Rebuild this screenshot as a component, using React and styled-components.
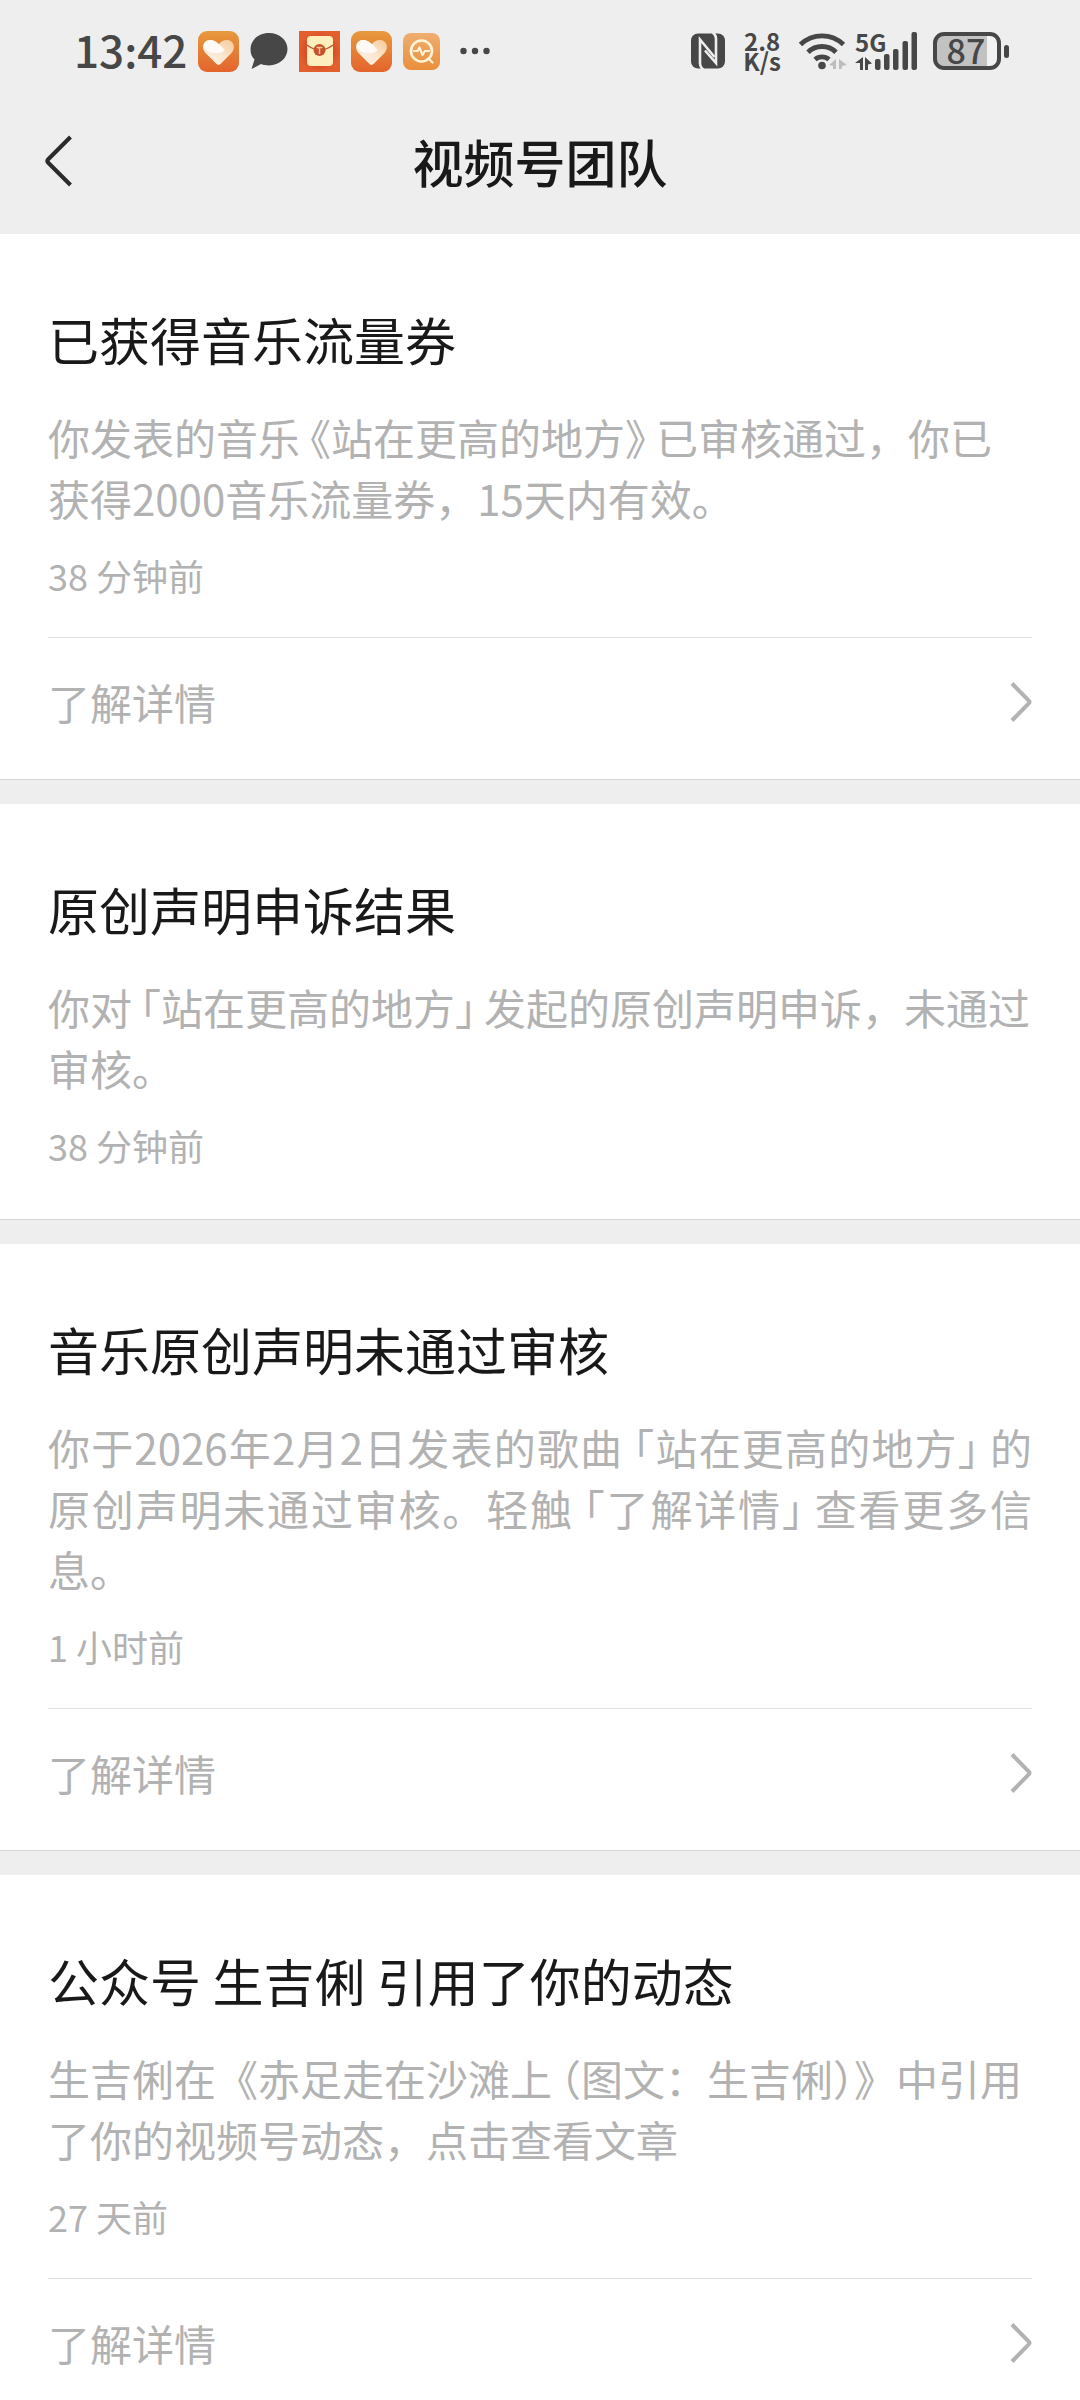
import React from "react";
import styled, { createGlobalStyle } from "styled-components";

const GlobalStyle = createGlobalStyle`
  * { box-sizing: border-box; }
  body {
    margin: 0;
    background: #ffffff;
    font-family: "Noto Sans CJK SC", "Noto Sans", sans-serif;
  }
  h1, h2, p { margin: 0; }
`;

const Screen = styled.div`
  height: 100vh;
  display: flex;
  flex-direction: column;
  background: #ffffff;
`;

const TopArea = styled.header`
  flex: none;
  background: #eeeeee;
  padding-bottom: 14px;
`;

const StatusBar = styled.div`
  display: flex;
  justify-content: space-between;
  align-items: center;
  height: 102px;
  padding: 0 71px 0 74px;
  color: #474747;
`;

const StatusGroup = styled.div`
  display: flex;
  align-items: center;
  gap: ${(p) => p.$gap}px;
`;

const Clock = styled.time`
  padding-bottom: 4px;
  font-size: 44px;
  line-height: 60px;
  font-weight: 500;
`;

const NetSpeed = styled.div`
  font-size: 24px;
  line-height: 20px;
  font-weight: 700;
  text-align: center;
`;

const Signal = styled.div`
  position: relative;
  display: flex;
`;

const NetType = styled.span`
  position: absolute;
  left: 0;
  top: 0;
  font-size: 24px;
  line-height: 20px;
  font-weight: 700;
`;

const Battery = styled.div`
  display: flex;
  align-items: center;
  gap: 3px;
`;

const BatteryBody = styled.div`
  display: flex;
  align-items: center;
  justify-content: center;
  width: 68px;
  height: 38px;
  padding: 0 2px 3px 0;
  border: 4px solid #474747;
  border-radius: 11px;
  background: linear-gradient(to right, #c2c2c2 50px, #f2f2f2 50px);
  font-size: 34px;
  line-height: 38px;
  font-weight: 500;
`;

const BatteryTip = styled.div`
  width: 5px;
  height: 13px;
  border-radius: 3px;
  background: #474747;
`;

const NavBar = styled.div`
  display: grid;
  grid-template-columns: 120px 1fr 120px;
  align-items: center;
  height: 118px;
`;

const BackButton = styled.button`
  display: flex;
  align-items: center;
  height: 100px;
  padding: 0 0 0 44px;
  border: 0;
  background: none;
`;

const NavTitle = styled.h1`
  font-size: 51px;
  line-height: 74px;
  font-weight: 500;
  text-align: center;
  color: #191919;
`;

const MessageList = styled.main`
  flex: 1;
  min-height: 0;
  overflow-y: auto;
  scrollbar-width: none;
  background: #eeeeee;
`;

const Card = styled.article`
  margin-bottom: 24px;
  padding: 70px 48px ${(p) => (p.$linked ? 14 : 49)}px;
  border-bottom: 1px solid #d8d8d8;
  background: #ffffff;
`;

const CardTitle = styled.h2`
  font-size: 51px;
  line-height: 70px;
  font-weight: 400;
  color: #191919;
`;

const CardText = styled.p`
  margin-top: 32px;
  font-size: 42px;
  line-height: 61px;
  text-align: ${(p) => (p.$justify ? "justify" : "left")};
  color: #b2b2b2;
`;

const CardTime = styled.time`
  display: block;
  margin-top: 22px;
  font-size: 36px;
  line-height: 50px;
  color: #b2b2b2;
`;

const DetailLink = styled.a`
  display: flex;
  justify-content: space-between;
  align-items: center;
  height: 128px;
  margin-top: 37px;
  border-top: 1px solid #e2e2e2;
  font-size: 42px;
  line-height: 61px;
  color: #b2b2b2;
  text-decoration: none;
`;

/* Brackets set at half width, with a small gap on their outer side. */
const Open = styled.span`
  margin-left: ${(p) => (p.$tight ? 8 : 10)}px;
  font-feature-settings: "halt";
`;

const Close = styled.span`
  margin-right: ${(p) => (p.$tight ? 8 : 10)}px;
  font-feature-settings: "halt";
`;

function HeartApp({ id }) {
  return (
    <svg width="41" height="41" viewBox="0 0 41 41" aria-hidden="true">
      <defs>
        <linearGradient id={id} x1="0" y1="0" x2="0" y2="1">
          <stop offset="0" stopColor="#e79a3e" />
          <stop offset="1" stopColor="#e4642c" />
        </linearGradient>
        <linearGradient id={id + "h"} x1="1" y1="0" x2="0" y2="1">
          <stop offset="0" stopColor="#f6c995" />
          <stop offset="0.5" stopColor="#fbe7d2" />
          <stop offset="1" stopColor="#fff4ea" />
        </linearGradient>
      </defs>
      <rect width="41" height="41" rx="9" fill={`url(#${id})`} />
      <path
        d="M18.500 33 7.500 22C3 17.400 4.500 9 12 9c4 0 6.500 2 8.500 4.500C22.500 11 25 9 29 9c7.200 0 9 8.400 4.500 13L22.500 33q-2 1.800-4 0Z"
        fill={`url(#${id}h)`}
      />
      <path d="M6 17c-1-5 2-8 6.500-8 5 0 11 6 14 10-2 3-5 3-9 3-5 0-10-2-11.500-5Z" fill="#fffaf5" />
    </svg>
  );
}

function BubbleIcon() {
  return (
    <svg width="38" height="38" viewBox="0 0 38 38" aria-hidden="true">
      <path
        d="M19 1C8.500 1 .5 8 .5 17c0 5 1.500 8 4 10.500L1.500 37l9.500-5c2.500 1 5 1.400 8 1.400 10.500 0 18.500-7.400 18.500-16.400S29.500 1 19 1Z"
        fill="#474747"
      />
    </svg>
  );
}

function EnvelopeApp() {
  return (
    <svg width="41" height="41" viewBox="0 0 41 41" aria-hidden="true">
      <defs>
        <radialGradient id="env">
          <stop offset="0.5" stopColor="#d9431f" />
          <stop offset="1" stopColor="#e2602d" />
        </radialGradient>
      </defs>
      <rect width="41" height="41" fill="url(#env)" />
      <rect x="8" y="5" width="26" height="30" rx="4" fill="#fdf0bd" />
      <path d="M8 14c4 3 8 5 13 5s9-2 13-5" fill="none" stroke="#b8562d" strokeWidth="1.500" />
      <circle cx="20.500" cy="19" r="6" fill="#c8502a" />
      <path d="M17.500 16.500h6M20.500 16.500v6.500" stroke="#f3c693" strokeWidth="1.500" />
    </svg>
  );
}

function PulseApp() {
  return (
    <svg width="37" height="37" viewBox="0 0 37 37" aria-hidden="true">
      <defs>
        <linearGradient id="pulse" x1="0" y1="0" x2="0" y2="1">
          <stop offset="0" stopColor="#efae70" />
          <stop offset="1" stopColor="#e98f3c" />
        </linearGradient>
      </defs>
      <rect width="37" height="37" rx="8" fill="url(#pulse)" />
      <circle cx="18.500" cy="18" r="10.500" fill="none" stroke="#fff3d8" strokeWidth="2.600" />
      <path
        d="M11 18h3.500l2-3.500 3 7.500 2.500-4H26M25.500 25.500l4 4"
        fill="none"
        stroke="#fff3d8"
        strokeWidth="2.200"
        strokeLinecap="round"
        strokeLinejoin="round"
      />
    </svg>
  );
}

function DotsIcon() {
  return (
    <svg width="30" height="8" viewBox="0 0 30 8" aria-hidden="true" fill="#474747">
      <circle cx="3.500" cy="4" r="3.200" />
      <circle cx="15" cy="4" r="3.200" />
      <circle cx="26.500" cy="4" r="3.200" />
    </svg>
  );
}

function NfcIcon() {
  return (
    <svg width="34" height="36" viewBox="0 0 34 36" aria-hidden="true">
      <rect y="0.500" width="34" height="35" rx="7" fill="#474747" />
      <g fill="none" stroke="#eeeeee" strokeWidth="2.600">
        <path d="M12.500 36.500Q9 34.500 9 30V6.500L23.500 24" />
        <path d="M21.500-.5Q25 1.500 25 6v24L14 17.500" />
      </g>
    </svg>
  );
}

function WifiIcon() {
  return (
    <svg width="48" height="38" viewBox="0 0 48 38" aria-hidden="true">
      <g fill="none" stroke="#474747" strokeWidth="4.800">
        <path d="M1.500 12.500a31 31 0 0 1 43 0" />
        <path d="M9 20.200a20 20 0 0 1 28 0" />
        <path d="M16 27.500a10.500 10.500 0 0 1 14 0" />
      </g>
      <circle cx="23" cy="33.500" r="3.800" fill="#474747" />
      <path d="M37 27v10h-3v-3l-4-1Zm3 0 8 6-5 1-.5 3H40Z" fill="#bdbdbd" />
    </svg>
  );
}

function SignalIcon() {
  return (
    <svg width="63" height="38" viewBox="0 0 63 38" aria-hidden="true" fill="#474747">
      <path d="M8 25v13H5v-7H0ZM10 25l7 6.500-4 1V38h-3Z" />
      <rect x="20" y="27" width="5.500" height="11" rx="2" />
      <rect x="29" y="22" width="5.500" height="16" rx="2" />
      <rect x="38" y="17" width="5.500" height="21" rx="2" />
      <rect x="47.500" y="9" width="5.500" height="29" rx="2" />
      <rect x="56.500" y="0" width="5.500" height="38" rx="2" />
    </svg>
  );
}

function BackIcon() {
  return (
    <svg width="30" height="54" viewBox="0 0 30 54" aria-hidden="true">
      <path
        d="M26.500 3 4 25.500q-1.500 1.500 0 3L26.500 51"
        fill="none"
        stroke="#2b2b2b"
        strokeWidth="4"
      />
    </svg>
  );
}

function ChevronIcon() {
  return (
    <svg width="22" height="42" viewBox="0 0 22 42" aria-hidden="true">
      <path d="M2 2.500 18.800 19.700q1.300 1.300 0 2.600L2 39.500" fill="none" stroke="#b2b2b2" strokeWidth="4" />
    </svg>
  );
}

const messages = [
  {
    title: "已获得音乐流量券",
    text: (
      <>
        你发表的音乐<Open>《</Open>站在更高的地方<Close>》</Close>
        已审核通过，你已获得2000音乐流量券，15天内有效。
      </>
    ),
    time: "38 分钟前",
    linked: true,
  },
  {
    title: "原创声明申诉结果",
    text: (
      <>
        你对<Open $tight>「</Open>站在更高的地方<Close $tight>」</Close>
        发起的原创声明申诉，未通过审核。
      </>
    ),
    time: "38 分钟前",
  },
  {
    title: "音乐原创声明未通过审核",
    text: (
      <>
        你于2026年2月2日发表的歌曲<Open>「</Open>站在更高的地方<Close>」</Close>
        的原创声明未通过审核。轻触<Open>「</Open>了解详情<Close>」</Close>
        查看更多信息。
      </>
    ),
    time: "1 小时前",
    linked: true,
    justify: true,
  },
  {
    title: "公众号 生吉俐 引用了你的动态",
    text: (
      <>
        生吉俐在《赤足走在沙滩上<Open $tight>（</Open>图文：生吉俐）》中引用了你的视频号动态，点击查看文章
      </>
    ),
    time: "27 天前",
    linked: true,
  },
];

function Message({ title, text, time, linked, justify }) {
  return (
    <Card $linked={linked}>
      <CardTitle>{title}</CardTitle>
      <CardText $justify={justify}>{text}</CardText>
      <CardTime>{time}</CardTime>
      {linked && (
        <DetailLink href="#detail">
          了解详情
          <ChevronIcon />
        </DetailLink>
      )}
    </Card>
  );
}

export default function App() {
  return (
    <Screen lang="zh-CN">
      <GlobalStyle />
      <TopArea>
        <StatusBar>
          <StatusGroup $gap={20}>
            <StatusGroup $gap={11}>
              <Clock>13:42</Clock>
              <HeartApp id="heartA" />
              <BubbleIcon />
              <EnvelopeApp />
              <HeartApp id="heartB" />
              <PulseApp />
            </StatusGroup>
            <DotsIcon />
          </StatusGroup>
          <StatusGroup $gap={18}>
            <NfcIcon />
            <NetSpeed>
              2.8
              <br />
              K/s
            </NetSpeed>
            <StatusGroup $gap={8}>
              <WifiIcon />
              <StatusGroup $gap={15}>
                <Signal>
                  <SignalIcon />
                  <NetType>5G</NetType>
                </Signal>
                <Battery>
                  <BatteryBody>87</BatteryBody>
                  <BatteryTip />
                </Battery>
              </StatusGroup>
            </StatusGroup>
          </StatusGroup>
        </StatusBar>
        <NavBar>
          <BackButton type="button" aria-label="返回">
            <BackIcon />
          </BackButton>
          <NavTitle>视频号团队</NavTitle>
        </NavBar>
      </TopArea>
      <MessageList>
        {messages.map((m) => (
          <Message key={m.title} {...m} />
        ))}
      </MessageList>
    </Screen>
  );
}
